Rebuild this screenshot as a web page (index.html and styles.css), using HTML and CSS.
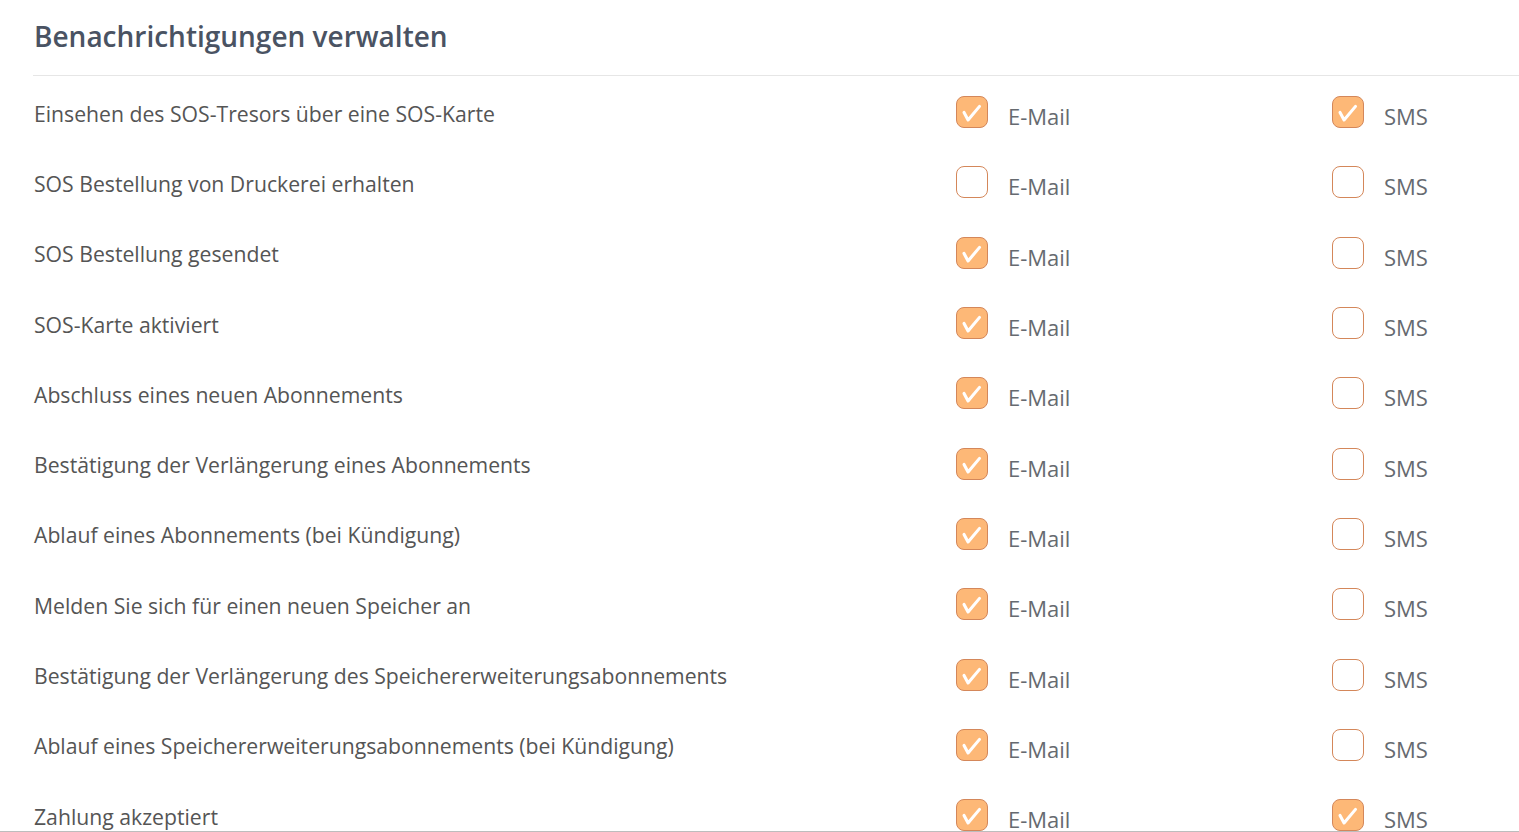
FILE: index.html
```html
<!DOCTYPE html>
<html lang="de">
<head>
<meta charset="utf-8">
<link rel="stylesheet" href="styles.css">
</head>
<body>
<svg width="0" height="0" style="position:absolute">
  <defs>
    <symbol id="tick" viewBox="0 0 32 32"><path d="M7.5 16.5 L11.8 24.5 L24 10" fill="none" stroke="#ffffff" stroke-width="3.3" stroke-linecap="round" stroke-linejoin="round"/></symbol>
  </defs>
</svg>
<div class="page">
  <h1 class="title">Benachrichtigungen verwalten</h1>
  <div class="list">
    <div class="row"><span class="label">Einsehen des SOS-Tresors über eine SOS-Karte</span><span class="opt"><span class="cb on"><svg class="tk"><use href="#tick"/></svg></span><span class="otext">E-Mail</span></span><span class="opt"><span class="cb on"><svg class="tk"><use href="#tick"/></svg></span><span class="otext">SMS</span></span></div>
    <div class="row"><span class="label">SOS Bestellung von Druckerei erhalten</span><span class="opt"><span class="cb"></span><span class="otext">E-Mail</span></span><span class="opt"><span class="cb"></span><span class="otext">SMS</span></span></div>
    <div class="row"><span class="label">SOS Bestellung gesendet</span><span class="opt"><span class="cb on"><svg class="tk"><use href="#tick"/></svg></span><span class="otext">E-Mail</span></span><span class="opt"><span class="cb"></span><span class="otext">SMS</span></span></div>
    <div class="row"><span class="label">SOS-Karte aktiviert</span><span class="opt"><span class="cb on"><svg class="tk"><use href="#tick"/></svg></span><span class="otext">E-Mail</span></span><span class="opt"><span class="cb"></span><span class="otext">SMS</span></span></div>
    <div class="row"><span class="label">Abschluss eines neuen Abonnements</span><span class="opt"><span class="cb on"><svg class="tk"><use href="#tick"/></svg></span><span class="otext">E-Mail</span></span><span class="opt"><span class="cb"></span><span class="otext">SMS</span></span></div>
    <div class="row"><span class="label">Bestätigung der Verlängerung eines Abonnements</span><span class="opt"><span class="cb on"><svg class="tk"><use href="#tick"/></svg></span><span class="otext">E-Mail</span></span><span class="opt"><span class="cb"></span><span class="otext">SMS</span></span></div>
    <div class="row"><span class="label">Ablauf eines Abonnements (bei Kündigung)</span><span class="opt"><span class="cb on"><svg class="tk"><use href="#tick"/></svg></span><span class="otext">E-Mail</span></span><span class="opt"><span class="cb"></span><span class="otext">SMS</span></span></div>
    <div class="row"><span class="label">Melden Sie sich für einen neuen Speicher an</span><span class="opt"><span class="cb on"><svg class="tk"><use href="#tick"/></svg></span><span class="otext">E-Mail</span></span><span class="opt"><span class="cb"></span><span class="otext">SMS</span></span></div>
    <div class="row"><span class="label">Bestätigung der Verlängerung des Speichererweiterungsabonnements</span><span class="opt"><span class="cb on"><svg class="tk"><use href="#tick"/></svg></span><span class="otext">E-Mail</span></span><span class="opt"><span class="cb"></span><span class="otext">SMS</span></span></div>
    <div class="row"><span class="label">Ablauf eines Speichererweiterungsabonnements (bei Kündigung)</span><span class="opt"><span class="cb on"><svg class="tk"><use href="#tick"/></svg></span><span class="otext">E-Mail</span></span><span class="opt"><span class="cb"></span><span class="otext">SMS</span></span></div>
    <div class="row"><span class="label">Zahlung akzeptiert</span><span class="opt"><span class="cb on"><svg class="tk"><use href="#tick"/></svg></span><span class="otext">E-Mail</span></span><span class="opt"><span class="cb on"><svg class="tk"><use href="#tick"/></svg></span><span class="otext">SMS</span></span></div>
  </div>
</div>
</body>
</html>
```
FILE: styles.css
```css
html, body {
  margin: 0;
  padding: 0;
  background: #ffffff;
  height: 832px;
  overflow: hidden;
}
body {
  font-family: "Open Sans", "Noto Sans", sans-serif;
  border-bottom: 1px solid #bdbdbd;
  box-sizing: border-box;
}
.page {
  padding-left: 33px;
}
.title {
  margin: 0;
  height: 76px;
  box-sizing: border-box;
  padding: 16px 0 0 1px;
  font-size: 28px;
  font-weight: 600;
  color: #4a5363;
  border-bottom: 1px solid #e6e6e6;
  line-height: 40px;
}
.row {
  display: grid;
  grid-template-columns: 922px 376px 1fr;
  height: 70.3px;
  align-items: center;
  padding-left: 1px;
}
.label {
  font-size: 21.2px;
  color: #555555;
  position: relative;
  top: 2px;
}
.opt {
  display: flex;
  align-items: center;
  gap: 20px;
  position: relative;
  top: 5px;
}
.cb {
  width: 30px;
  height: 30px;
  border: 1px solid #d4875a;
  border-radius: 8px;
  background: #fff;
  position: relative;
  top: -4px;
  flex: none;
  display: block;
}
.cb.on {
  background: #fdb877;
}
.tk {
  display: block;
  width: 30px;
  height: 30px;
}
.otext {
  font-size: 22px;
  color: #666a70;
}
```
